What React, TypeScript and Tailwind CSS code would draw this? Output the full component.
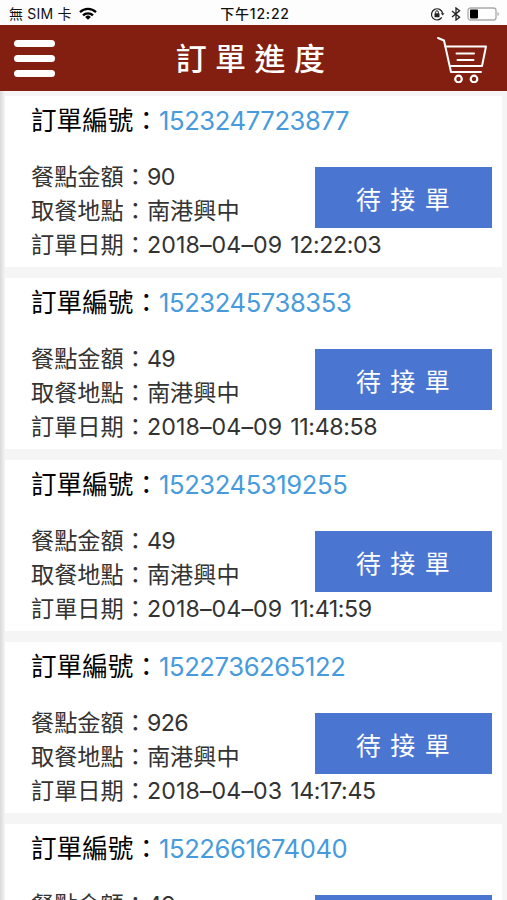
const orders = [
  { id: "1523247723877", amount: "90", place: "南港興中", date: "2018–04–09", time: "12:22:03" },
  { id: "1523245738353", amount: "49", place: "南港興中", date: "2018–04–09", time: "11:48:58" },
  { id: "1523245319255", amount: "49", place: "南港興中", date: "2018–04–09", time: "11:41:59" },
  { id: "1522736265122", amount: "926", place: "南港興中", date: "2018–04–03", time: "14:17:45" },
  { id: "1522661674040", amount: "49", place: "南港興中", date: "2018–04–02", time: "17:34:34" },
]

function StatusBar() {
  return (
    <div className="grid h-[25px] shrink-0 grid-cols-3 items-center bg-[#fdfdfd] pt-[2px] pr-[7px] pl-[9px] text-[14px] leading-none text-[#111]">
      <div className="flex items-center">
        <span className="whitespace-nowrap tracking-[0.2px]">無 SIM 卡</span>
        <svg className="ml-[7px] h-[13px] w-[18px]" viewBox="0 0 18 13" fill="none" stroke="#000" strokeWidth="2.3">
          <path d="M1 5.1a11.6 11.6 0 0 1 16 0" />
          <path d="M4 8.3a7.2 7.2 0 0 1 10 0" />
          <path d="M9 12.7 6.2 9.9a4 4 0 0 1 5.6 0Z" fill="#000" stroke="none" />
        </svg>
      </div>
      <span className="pl-[1px] text-center font-medium tracking-[0.8px] whitespace-nowrap">下午12:22</span>
      <div className="flex items-center justify-end">
        <svg className="h-[14px] w-[15px]" viewBox="0 0 15 14" fill="none" stroke="#222" strokeWidth="1.2">
          <path d="M11.8 10.4A5.6 5.6 0 1 1 12.6 6.4" />
          <path d="M10.8 6.2h3.7l-1.8 2.4Z" fill="#222" stroke="none" />
          <rect x="4.5" y="6.3" width="5" height="3.9" rx=".5" fill="#222" stroke="none" />
          <path d="M5.6 6.5V5.2a1.4 1.4 0 0 1 2.8 0v1.3" strokeWidth="1" />
        </svg>
        <svg className="ml-[6px] h-[14px] w-[10px]" viewBox="0 0 10 14" fill="none" stroke="#222" strokeWidth="1.3">
          <path d="m1 4 7.6 6.2L5 13V1l3.6 2.8L1 10" />
        </svg>
        <svg className="ml-[6px] h-[14px] w-[33px]" viewBox="0 0 33 14">
          <rect x="1" y="1" width="28" height="12" rx="2.6" fill="#fff" stroke="#aaa" strokeWidth="1.3" />
          <rect x="3" y="2.6" width="8" height="8.8" rx=".8" fill="#000" />
          <path d="M30.5 5v4q1.4-.6 1.4-2t-1.4-2Z" fill="#aaa" />
        </svg>
      </div>
    </div>
  )
}

function Header() {
  return (
    <header className="flex h-[66px] shrink-0 items-center justify-between bg-[#821f11] pr-[19px] pl-[14px]">
      <button className="flex w-[41px] flex-col gap-[8px]">
        <span className="h-[7px] rounded-full bg-white" />
        <span className="h-[7px] rounded-full bg-white" />
        <span className="h-[7px] rounded-full bg-white" />
      </button>
      <h1 className="pl-[18px] text-[31px] leading-none font-medium tracking-[8.4px] text-white">訂單進度</h1>
      <svg className="h-[49px] w-[52px]" viewBox="0 0 52 49" fill="none" stroke="#fff" strokeWidth="2" strokeLinecap="round" strokeLinejoin="round">
        <path d="M2 4 8 6.5 15 38h30" />
        <path d="M9.5 12.5H50L46 32H14" />
        <path d="M20.5 19.5H38M21.5 26h16" />
        <circle cx="22.5" cy="45" r="3.3" strokeWidth="2.2" />
        <circle cx="38" cy="45" r="3.3" strokeWidth="2.2" />
      </svg>
    </header>
  )
}

function OrderCard({ order }: { order: (typeof orders)[number] }) {
  return (
    <section className="h-[171px] shrink-0 bg-white pl-[26px] pr-[10px]">
      <h2 className="flex h-[50px] items-center whitespace-nowrap text-[25.6px] leading-none text-black">
        訂單編號：
        <span className="tracking-[-0.4px] text-[#479bdc]">{order.id}</span>
      </h2>
      <div className="mt-[14px] flex items-start justify-between">
        <div className="w-0 text-[23.2px] leading-[34.2px] whitespace-nowrap text-[#333]">
          <p className="flex">
            餐點金額：
            <span className="tracking-[-0.6px]">{order.amount}</span>
          </p>
          <p>取餐地點：{order.place}</p>
          <p className="flex">
            訂單日期：
            <span className="tracking-[0.1px]">{order.date}</span>
            <span className="ml-[8px] tracking-[-0.4px]">{order.time}</span>
          </p>
        </div>
        <button className="mt-[7px] h-[61px] w-[177px] bg-[#4a76d2] pt-[5px] pl-[8px] text-[25px] leading-none tracking-[9.3px] text-white">
          待接單
        </button>
      </div>
    </section>
  )
}

export default function App() {
  return (
    <div className="flex h-[900px] w-full flex-col overflow-hidden bg-[#f5f5f5] font-['Inter','Noto_Sans_CJK_TC',sans-serif]">
      <StatusBar />
      <Header />
      <main className="flex min-h-0 flex-1">
        <div className="w-[5px] shrink-0 bg-linear-to-r from-[#d9d9d9] to-[#f5f5f5]" />
        <div className="flex min-w-0 flex-1 flex-col gap-[11px] overflow-hidden pt-[5px] pr-[5px]">
          {orders.map((order) => (
            <OrderCard key={order.id} order={order} />
          ))}
        </div>
      </main>
    </div>
  )
}
